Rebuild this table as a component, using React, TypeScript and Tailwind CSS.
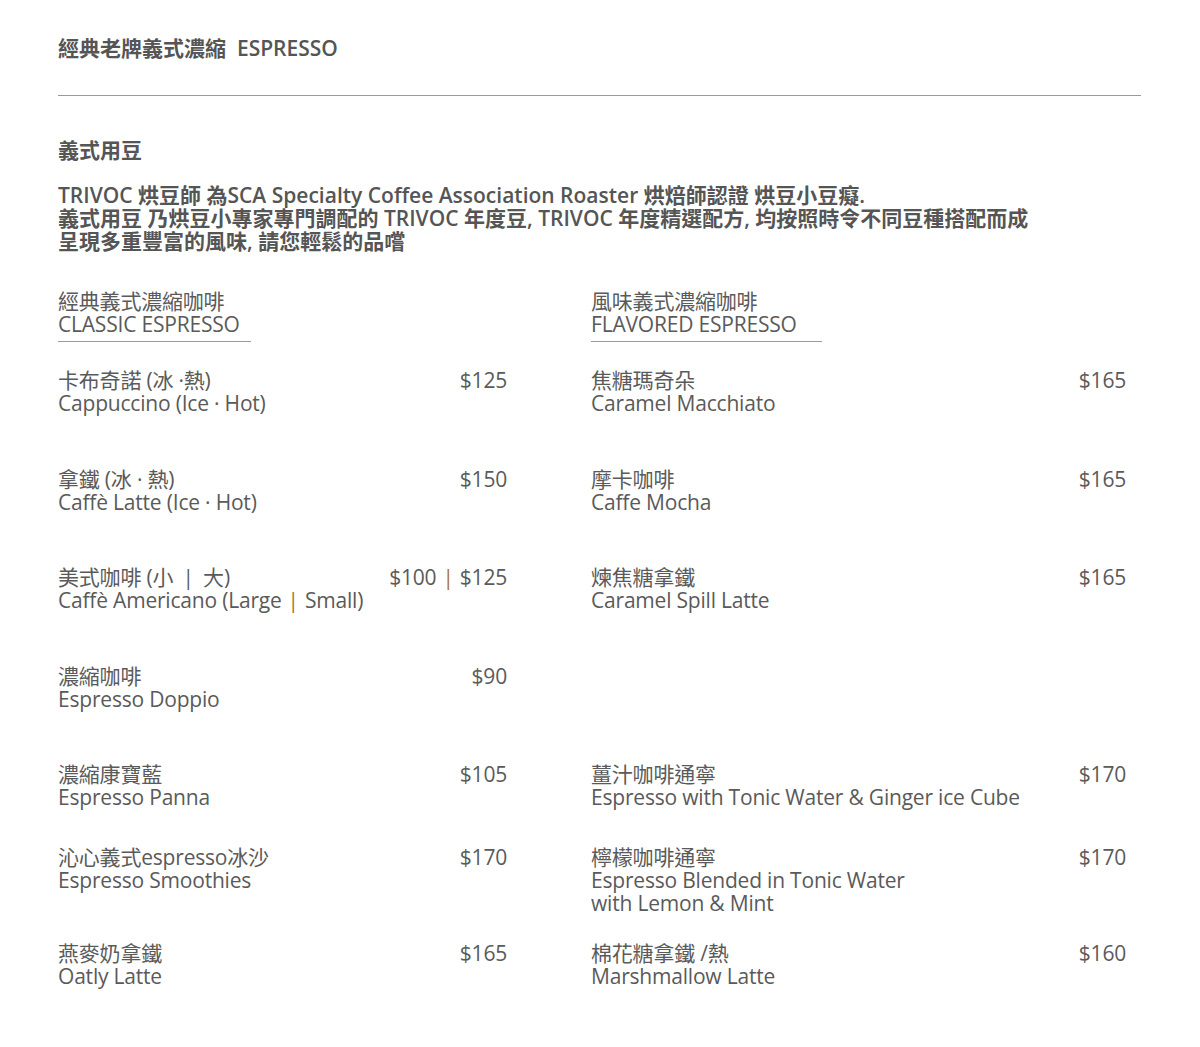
import React from 'react';

type Item = { zh: React.ReactNode; en: React.ReactNode; price: React.ReactNode };

const Bar = () => <span className="text-[#a8753a] px-[6px]">|</span>;

const rows: { h: string; left?: Item; right?: Item }[] = [
  {
    h: 'h-[99px]',
    left: { zh: '卡布奇諾 (冰 ·熱)', en: 'Cappuccino (Ice · Hot)', price: '$125' },
    right: { zh: '焦糖瑪奇朵', en: 'Caramel Macchiato', price: '$165' },
  },
  {
    h: 'h-[98px]',
    left: { zh: '拿鐵 (冰 · 熱)', en: 'Caffè Latte (Ice · Hot)', price: '$150' },
    right: { zh: '摩卡咖啡', en: 'Caffe Mocha', price: '$165' },
  },
  {
    h: 'h-[99px]',
    left: {
      zh: (
        <>
          美式咖啡 (小 <span className="px-[4px]">|</span> 大)
        </>
      ),
      en: (
        <>
          Caffè Americano (Large<Bar />Small)
        </>
      ),
      price: (
        <>
          $100<Bar />$125
        </>
      ),
    },
    right: { zh: '煉焦糖拿鐵', en: 'Caramel Spill Latte', price: '$165' },
  },
  {
    h: 'h-[98px]',
    left: { zh: '濃縮咖啡', en: 'Espresso Doppio', price: '$90' },
  },
  {
    h: 'h-[83px]',
    left: { zh: '濃縮康寶藍', en: 'Espresso Panna', price: '$105' },
    right: { zh: '薑汁咖啡通寧', en: 'Espresso with Tonic Water & Ginger ice Cube', price: '$170' },
  },
  {
    h: 'h-[96px]',
    left: { zh: '沁心義式espresso冰沙', en: 'Espresso Smoothies', price: '$170' },
    right: {
      zh: '檸檬咖啡通寧',
      en: (
        <>
          Espresso Blended in Tonic Water
          <br />
          with Lemon &amp; Mint
        </>
      ),
      price: '$170',
    },
  },
  {
    h: 'h-[70px]',
    left: { zh: '燕麥奶拿鐵', en: 'Oatly Latte', price: '$165' },
    right: { zh: '棉花糖拿鐵 /熱', en: 'Marshmallow Latte', price: '$160' },
  },
];

function MenuItem({ item }: { item?: Item }) {
  if (!item) return <div />;
  return (
    <div className="flex justify-between items-start">
      <div>
        <div>{item.zh}</div>
        <div>{item.en}</div>
      </div>
      <div className="whitespace-nowrap">{item.price}</div>
    </div>
  );
}

export default function App() {
  return (
    <div
      className="w-[1200px] min-h-[1047px] bg-white pt-[36px] pl-[58px] pr-[59px] text-[#5a5a5a]"
      style={{ fontFamily: '"Open Sans", "Noto Sans CJK TC", sans-serif' }}
    >
      <h1 className="text-[21px] leading-[24px] font-semibold text-[#555]">
        經典老牌義式濃縮&nbsp; ESPRESSO
      </h1>
      <hr className="mt-[35px] border-0 border-t border-[#9a9a9a]" />

      <h2 className="mt-[42px] text-[21px] leading-[24px] font-semibold text-[#555]">義式用豆</h2>
      <p className="mt-[22px] text-[21px] leading-[23px] font-semibold text-[#555]">
        TRIVOC 烘豆師 為SCA Specialty Coffee Association Roaster 烘焙師認證 烘豆小豆癡.
        <br />
        義式用豆 乃烘豆小專家專門調配的 TRIVOC 年度豆, TRIVOC 年度精選配方, 均按照時令不同豆種搭配而成
        <br />
        呈現多重豐富的風味, 請您輕鬆的品嚐
      </p>

      <div className="mt-[37px] text-[21px] leading-[23px] tracking-[-0.2px]">
        <div className="grid grid-cols-[449px_535px] gap-x-[84px]">
          <div>
            <div className="w-[193px] border-b border-[#9a9a9a] pb-[5px]">
              <div>經典義式濃縮咖啡</div>
              <div>CLASSIC ESPRESSO</div>
            </div>
          </div>
          <div>
            <div className="w-[231px] border-b border-[#9a9a9a] pb-[5px]">
              <div>風味義式濃縮咖啡</div>
              <div>FLAVORED ESPRESSO</div>
            </div>
          </div>
        </div>

        <div className="mt-[27px]">
          {rows.map((r, i) => (
            <div key={i} className={`grid grid-cols-[449px_535px] gap-x-[84px] ${r.h}`}>
              <MenuItem item={r.left} />
              <MenuItem item={r.right} />
            </div>
          ))}
        </div>
      </div>
    </div>
  );
}
